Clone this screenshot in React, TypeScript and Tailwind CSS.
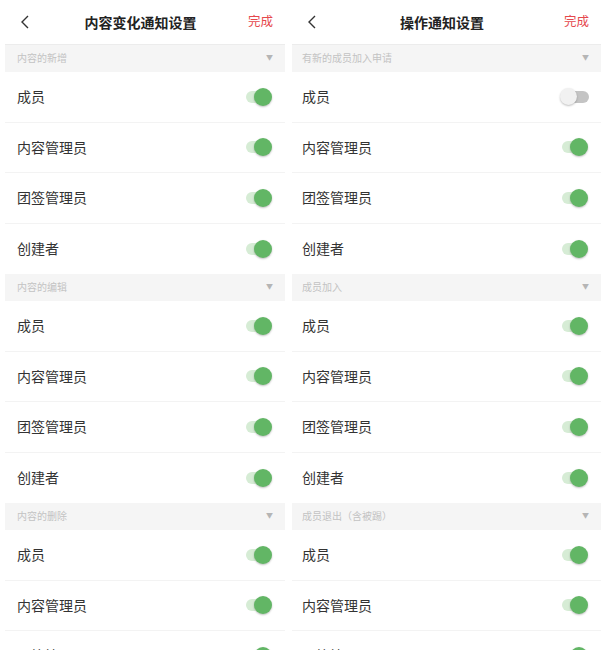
import React from 'react'

interface Section {
  title: string
  rows: { label: string; on: boolean }[]
}

interface Panel {
  title: string
  width: string
  pad: string
  sections: Section[]
}

const roles = ['成员', '内容管理员', '团签管理员', '创建者']

const allOn = (offFirst = false) =>
  roles.map((label, i) => ({ label, on: !(offFirst && i === 0) }))

const panels: Panel[] = [
  {
    title: '内容变化通知设置',
    width: 'w-[280px] ml-[5px]',
    pad: 'pl-[12px]',
    sections: [
      { title: '内容的新增', rows: allOn() },
      { title: '内容的编辑', rows: allOn() },
      { title: '内容的删除', rows: allOn() },
    ],
  },
  {
    title: '操作通知设置',
    width: 'flex-1 ml-[7px]',
    pad: 'pl-[10px]',
    sections: [
      { title: '有新的成员加入申请', rows: allOn(true) },
      { title: '成员加入', rows: allOn() },
      { title: '成员退出（含被踢）', rows: allOn() },
    ],
  },
]

function Toggle({ on }: { on: boolean }) {
  if (on) {
    return (
      <div className="relative w-[26px] h-[18px] flex items-center">
        <div className="h-[12px] w-[22px] rounded-full bg-[#d6ecd5]" />
        <div className="absolute right-0 top-0 w-[18px] h-[18px] rounded-full bg-[#62b665] shadow-[0_1px_2px_rgba(0,0,0,0.25)]" />
      </div>
    )
  }
  return (
    <div className="relative w-[29px] h-[18px] flex items-center justify-end mr-[-1px]">
      <div className="h-[12px] w-[22px] rounded-full bg-[#c4c4c4]" />
      <div className="absolute left-0 top-0 w-[17px] h-[17px] rounded-full bg-[#f1f1f1] shadow-[0_1px_2px_rgba(0,0,0,0.25)]" />
    </div>
  )
}

function PanelView({ panel }: { panel: Panel }) {
  return (
    <div className={`${panel.width} flex flex-col shrink-0`}>
      {/* Header */}
      <div className="h-[45px] shrink-0 flex items-center justify-between px-[12px] border-b border-[#ececec]">
        <svg width="14" height="16" viewBox="0 0 14 16" className="ml-[2px]">
          <polyline points="9,2 3,8 9,14" fill="none" stroke="#333" strokeWidth="1.4" />
        </svg>
        <span className="text-[14px] font-bold text-[#222]">{panel.title}</span>
        <span className="text-[12.5px] text-[#e5484d]">完成</span>
      </div>

      {panel.sections.map((section) => (
        <div key={section.title} className="shrink-0">
          <div className={`h-[27px] bg-[#f5f5f5] flex items-center justify-between ${panel.pad} pr-[12px]`}>
            <span className="text-[10px] text-[#c3c3c3]">{section.title}</span>
            <span className="text-[7px] text-[#b5b5b5]">▼</span>
          </div>
          {section.rows.map((row, i) => (
            <div
              key={row.label}
              className={`h-[50.5px] flex items-center justify-between ${panel.pad} pr-[13px] ${
                i < section.rows.length - 1 ? 'border-b border-[#f3f3f3]' : ''
              }`}
            >
              <span className="text-[14px] text-[#333]">{row.label}</span>
              <Toggle on={row.on} />
            </div>
          ))}
        </div>
      ))}
    </div>
  )
}

export default function App() {
  return (
    <div
      className="w-[601px] h-[650px] overflow-hidden bg-white flex items-start"
      style={{ fontFamily: '"Noto Sans", "Noto Sans CJK SC", sans-serif' }}
    >
      {panels.map((p) => (
        <PanelView key={p.title} panel={p} />
      ))}
    </div>
  )
}
